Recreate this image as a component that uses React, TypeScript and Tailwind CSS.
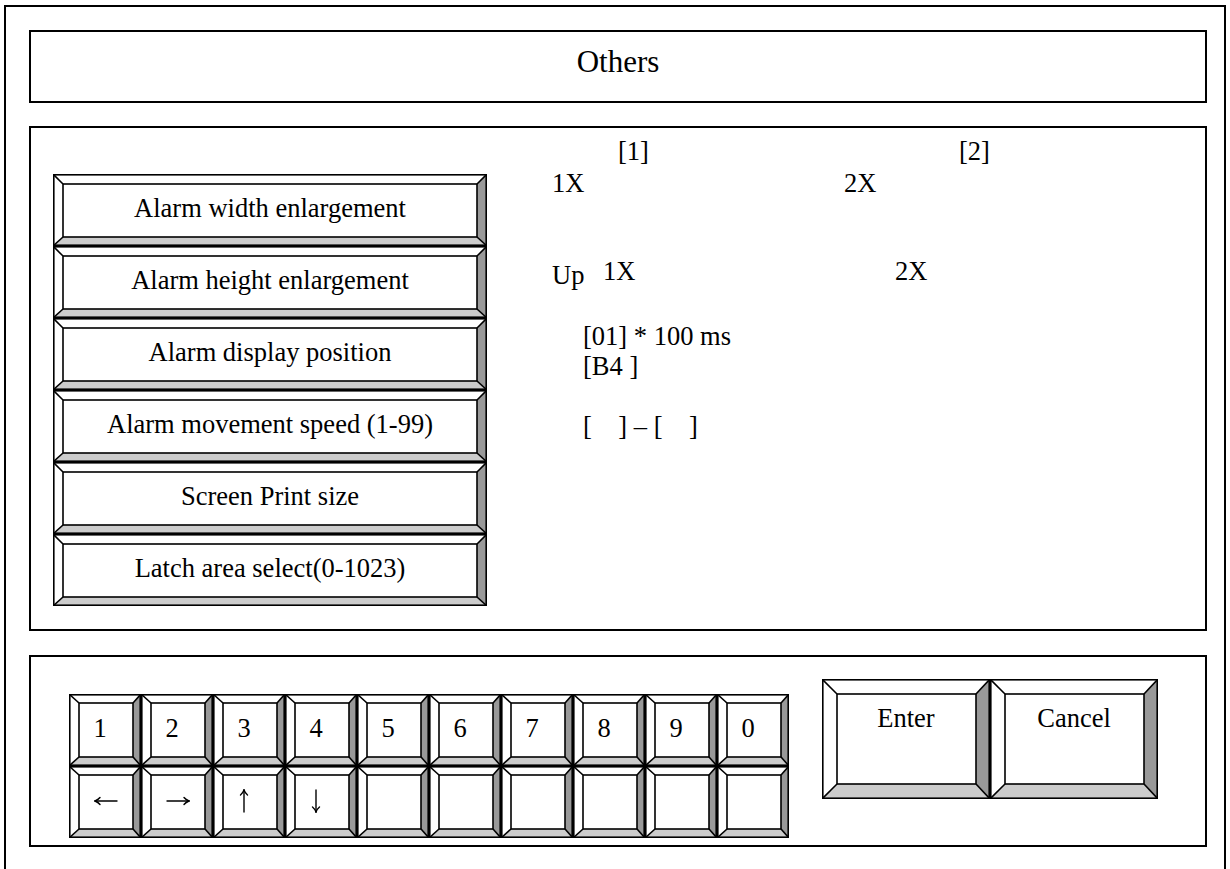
import { FC, ReactNode } from "react";
import { twMerge } from "tailwind-merge";

type BevelProps = {
    w: number;
    h: number;
    l: number;
    t: number;
    r: number;
    b: number;
    className?: string;
    contentClassName?: string;
    children?: ReactNode;
};

// raised key with four shaded edges, drawn as one svg behind the label
const Bevel: FC<BevelProps> = ({ w, h, l, t, r, b, className, contentClassName, children }) => (
    <div className={twMerge("relative shrink-0", className)}>
        <svg className="absolute inset-0" width={w} height={h} viewBox={`0 0 ${w} ${h}`}>
            <rect x={0} y={0} width={w} height={h} fill="#fff" />
            <polygon points={`0,0 ${w},0 ${w - r},${t} ${l},${t}`} fill="#fff" />
            <polygon points={`0,0 ${l},${t} ${l},${h - b} 0,${h}`} fill="#fff" />
            <polygon points={`${w},0 ${w},${h} ${w - r},${h - b} ${w - r},${t}`} fill="#999" />
            <polygon points={`0,${h} ${w},${h} ${w - r},${h - b} ${l},${h - b}`} fill="#ccc" />
            <g stroke="#000" strokeWidth={1.6} fill="none">
                <rect x={0.8} y={0.8} width={w - 1.6} height={h - 1.6} />
                <rect x={l} y={t} width={w - l - r} height={h - t - b} />
                <line x1={0} y1={0} x2={l} y2={t} />
                <line x1={w} y1={0} x2={w - r} y2={t} />
                <line x1={0} y1={h} x2={l} y2={h - b} />
                <line x1={w} y1={h} x2={w - r} y2={h - b} />
            </g>
        </svg>
        <div className={twMerge("relative flex h-full justify-center", contentClassName)}>{children}</div>
    </div>
);

// thin arrow like the serif font's arrow glyphs; points left before rotation
const Arrow: FC<{ angle: number }> = ({ angle }) => (
    <svg width={24} height={24} viewBox="0 0 24 24">
        <g transform={`rotate(${angle} 12 12)`} stroke="#000" strokeWidth={1.4} fill="none" strokeLinecap="round">
            <path d="M1 12H23" />
            <path d="M1 12C3 11.2 4.6 10.2 6 8.5" />
            <path d="M1 12C3 12.8 4.6 13.8 6 15.5" />
        </g>
    </svg>
);

const menu = [
    "Alarm width enlargement",
    "Alarm height enlargement",
    "Alarm display position",
    "Alarm movement speed (1-99)",
    "Screen Print size",
    "Latch area select(0-1023)",
];

const topKeys = ["1", "2", "3", "4", "5", "6", "7", "8", "9", "0"];
const arrows = [
    { angle: 0, pad: "pl-[25px]" },
    { angle: 180, pad: "pl-[25px]" },
    { angle: 90, pad: "pl-[19px]" },
    { angle: -90, pad: "pl-[19px]" },
];

const KeyFace: FC<{ contentClassName: string; children?: ReactNode }> = ({ contentClassName, children }) => (
    <Bevel w={72} h={72} l={10} t={9} r={8} b={9} className="h-[72px] w-[72px]" contentClassName={contentClassName}>
        {children}
    </Bevel>
);

export default function App() {
    return (
        <div className="h-[869px] overflow-hidden bg-white [font-family:Liberation_Serif,Times_New_Roman,serif] text-[26.5px] text-black">
            <div className="ml-[4px] mt-[5px] h-[900px] w-[1222px] border-2 border-black pl-[23px] pt-[23px]">
                {/* title */}
                <div className="flex h-[73px] w-[1178px] items-start justify-center border-2 border-black pt-[12px]">
                    <span className="text-[31px] leading-[36px]">Others</span>
                </div>

                {/* settings */}
                <div className="mt-[23px] flex h-[505px] w-[1178px] border-2 border-black">
                    <div className="flex flex-col pl-[22px] pt-[46px]">
                        {menu.map((item) => (
                            <Bevel key={item} w={434} h={72} l={10} t={10} r={10} b={9} className="h-[72px] w-[434px]" contentClassName="items-start pt-[19px]">
                                <span className="leading-[30px]">{item}</span>
                            </Bevel>
                        ))}
                    </div>

                    <div className="ml-[65px] flex flex-col pt-[8px] leading-[30px] whitespace-pre">
                        <div className="flex h-[30px]">
                            <span className="ml-[66px] w-[341px]">[1]</span>
                            <span>[2]</span>
                        </div>
                        <div className="mt-[2px] flex h-[30px]">
                            <span className="w-[292px]">1X</span>
                            <span>2X</span>
                        </div>
                        <div className="mt-[58px] flex h-[30px] items-start">
                            <span className="mt-[4px] w-[51px]">Up</span>
                            <span className="w-[292px]">1X</span>
                            <span>2X</span>
                        </div>
                        <div className="mt-[35px] h-[30px] pl-[31px]">[01] * 100 ms</div>
                        <div className="h-[30px] pl-[31px]">[B4 ]</div>
                        <div className="mt-[30px] h-[30px] pl-[31px]">{"[    ] – [    ]"}</div>
                    </div>
                </div>

                {/* keypad */}
                <div className="mt-[24px] flex h-[192px] w-[1178px] items-start border-2 border-black pl-[38px]">
                    <div className="mt-[37px] flex flex-col">
                        <div className="flex">
                            {topKeys.map((k) => (
                                <KeyFace key={k} contentClassName="items-start pt-[19px] pr-[10px]">
                                    <span className="leading-[30px]">{k}</span>
                                </KeyFace>
                            ))}
                        </div>
                        <div className="flex">
                            {arrows.map((a) => (
                                <KeyFace key={a.angle} contentClassName={twMerge("items-start justify-start pt-[23px]", a.pad)}>
                                    <Arrow angle={a.angle} />
                                </KeyFace>
                            ))}
                            {Array.from({ length: 6 }, (_, i) => (
                                <KeyFace key={i} contentClassName="" />
                            ))}
                        </div>
                    </div>
                    <div className="ml-[33px] mt-[22px] flex">
                        <Bevel w={168} h={120} l={15} t={15} r={14} b={15} className="h-[120px] w-[168px]" contentClassName="items-start pt-[24px]">
                            <span className="leading-[30px]">Enter</span>
                        </Bevel>
                        <Bevel w={168} h={120} l={15} t={15} r={14} b={15} className="h-[120px] w-[168px]" contentClassName="items-start pt-[24px]">
                            <span className="leading-[30px]">Cancel</span>
                        </Bevel>
                    </div>
                </div>
            </div>
        </div>
    );
}
